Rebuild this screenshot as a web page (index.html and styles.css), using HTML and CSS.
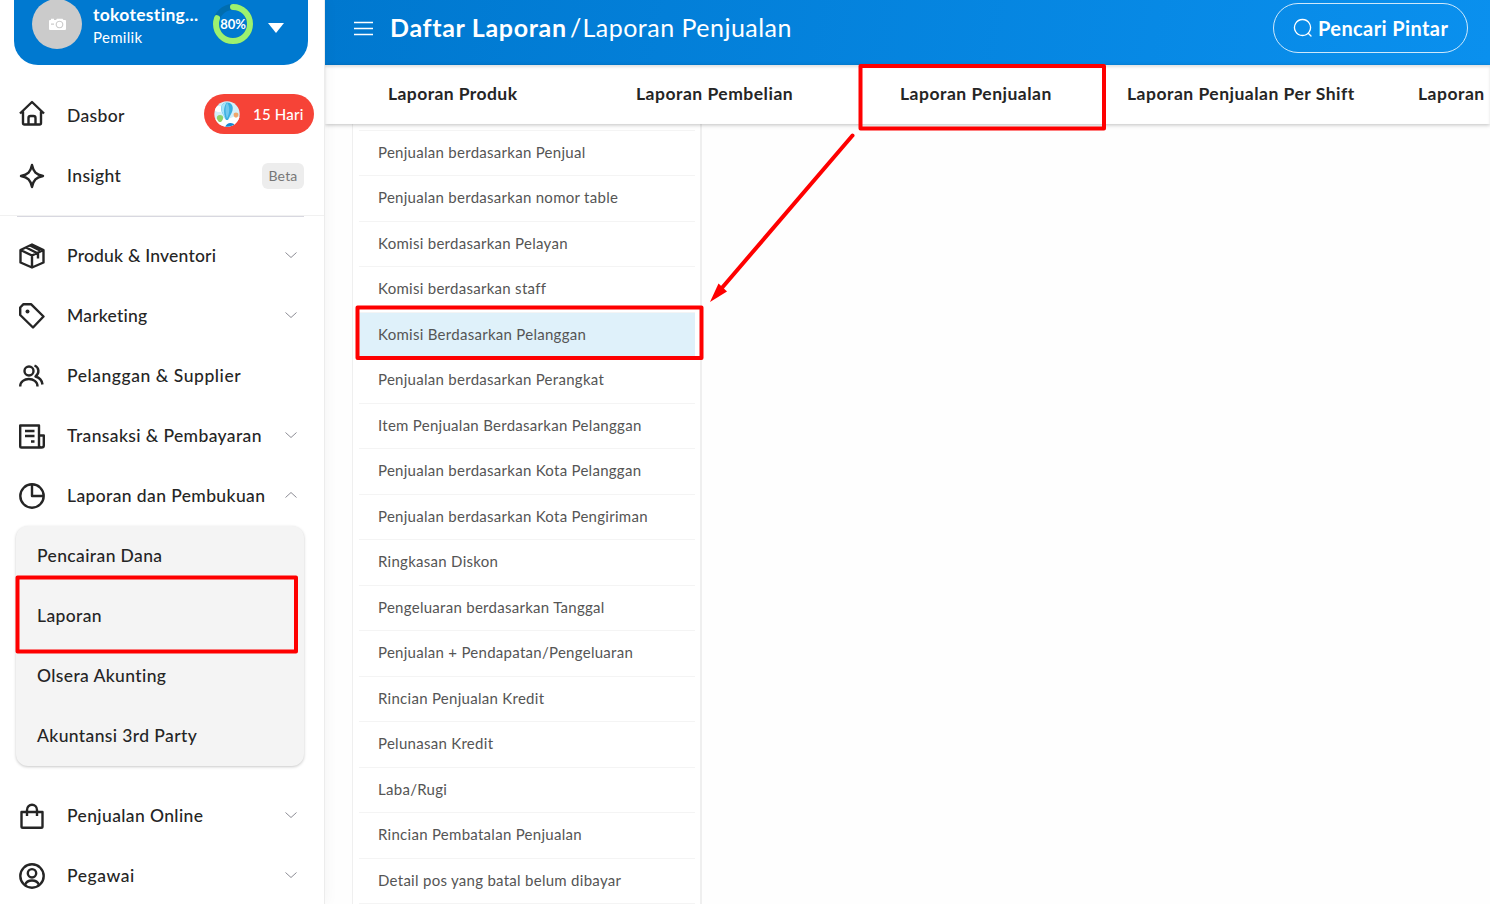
FILE: index.html
```html
<!DOCTYPE html>
<html lang="id">
<head>
<meta charset="utf-8">
<title>Daftar Laporan</title>
<link rel="stylesheet" href="styles.css">
</head>
<body>
<div class="app">
  <aside class="sidebar">
    <div class="account">
      <div class="avatar"><svg width="17" height="12" viewBox="0 0 17 12"><path fill="#fff" fill-rule="evenodd" d="M1 2h1V.8h3V2h2l1-1.2h5.5l1 1.2h1.500q1 0 1 1v8q0 1-1 1H1q-1 0-1-1V3q0-1 1-1zM10.500 2.700a3.800 3.800 0 1 0 .01 0zM2 5.500v1.200h3V5.500z"/><circle cx="10.500" cy="6.500" r="2.700" fill="#fff"/></svg></div>
      <div class="who"><div class="shop">tokotesting...</div><div class="role">Pemilik</div></div>
      <div class="progress">
        <svg width="40" height="40" viewBox="0 0 40 40"><circle cx="20" cy="20" r="17" fill="none" stroke="#006daf" stroke-width="6"/><circle cx="20" cy="20" r="17" fill="none" stroke="#9df16f" stroke-width="6" stroke-linecap="round" stroke-dasharray="85.500 120" transform="rotate(-90 20 20)"/></svg>
        <span class="percent">80%</span>
      </div>
      <svg class="caret" width="16" height="10" viewBox="0 0 16 10"><path fill="#fff" d="M0 0h16L8 10z"/></svg>
    </div>
    <nav class="nav nav-top">
      <a class="item dash"><svg class="icon" viewBox="0 0 26 26"><path d="M1 13.500 13 2l12 11.500M4 11.500V23q0 1.500 1.500 1.500h15q1.500 0 1.500-1.500V11.500M9.500 24V18q0-2 2-2h3q2 0 2 2v6"/></svg><span class="label">Dasbor</span>
        <span class="trial"><svg width="26" height="26" viewBox="0 0 26 26"><defs><clipPath id="disc"><circle cx="13" cy="13" r="12.700"/></clipPath></defs><g clip-path="url(#disc)"><path fill="#d3effa" d="M0 0h26v26H0z"/><ellipse cx="5" cy="8" rx="5" ry="3" fill="#fff"/><path fill="#fff" d="M0 19q8-4 13 0 7-5 13-3v10H0z"/><path fill="#3aaee0" d="M13 1.500C6 1.500 6 9 9.500 14l2.500 5h2l2.500-5C20 9 20 1.500 13 1.500z"/><path fill="#a6e3fa" d="M12.500 1.500C6 2 6.500 9 9.500 14l2 3.500c-2-6-2-11 1-16z"/><path fill="#70c8ee" d="M13 1.500c3 4 3 10 0 16-2-6-2-12 0-16z"/><path fill="#8ed36a" d="M6 14c-4 0-4 4-1 7h2c3-3 3-7-1-7z"/><path fill="#efa66b" d="M22 11.500c-3 0-3 3-1 5h2c2-2 2-5-1-5z"/><path fill="#1688d1" d="M11 26q3-6 9-3v3z"/></g></svg><span class="days">15 Hari</span></span></a>
      <a class="item"><svg class="icon" viewBox="0 0 26 26"><path d="M13 2c1.500 7 4 9.500 11 11-7 1.500-9.500 4-11 11-1.500-7-4-9.500-11-11 7-1.500 9.500-4 11-11z"/></svg><span class="label">Insight</span><span class="beta">Beta</span></a>
    </nav>
    <nav class="nav nav-main">
      <a class="item"><svg class="icon" viewBox="0 0 26 26"><path d="M13 1.500 24.500 7v12.500L13 24.500 1.500 19.500V7zM1.500 7 13 12.500 24.500 7M13 12.500v12M7 4.500l12 6v5M11 2.500l10 5"/></svg><span class="label produk">Produk &amp; Inventori</span><svg class="chev" viewBox="0 0 12 6"><path d="M.5.500 6 5.500 11.500.500"/></svg></a>
      <a class="item"><svg class="icon" viewBox="0 0 26 26"><path d="M1.200 4.500 4.500 1.200h7.500L24.500 13.500 14 24.500 1.200 12z"/><circle class="solid" cx="8.500" cy="8.500" r="2"/></svg><span class="label produk">Marketing</span><svg class="chev" viewBox="0 0 12 6"><path d="M.5.500 6 5.500 11.500.500"/></svg></a>
      <a class="item"><svg class="icon" viewBox="0 0 26 26"><circle cx="10" cy="8" r="4.500"/><path d="M1.200 23.500c0-10 17.300-10 17.300 0M15.500 2.500c5 2 5 8 1 11 4 1 6.500 4 7 8"/></svg><span class="label wide">Pelanggan &amp; Supplier</span></a>
      <a class="item"><svg class="icon" viewBox="0 0 26 26"><path d="M20 24.500H2.500q-1.300 0-1.300-1.300V2.500H20zM20 12.500h4.800v10q0 2-2.400 2T20 22.500M6 8h9.500M6 13h9.500M12 18.500h3.500"/></svg><span class="label">Transaksi &amp; Pembayaran</span><svg class="chev" viewBox="0 0 12 6"><path d="M.5.500 6 5.500 11.500.500"/></svg></a>
      <a class="item"><svg class="icon" viewBox="0 0 26 26"><circle cx="13" cy="13" r="11.700"/><path d="M13 1.500V13h11.500"/></svg><span class="label">Laporan dan Pembukuan</span><svg class="chev" viewBox="0 0 12 6"><path d="M.5 5.500 6 .500l5.500 5"/></svg></a>
      <div class="submenu">
        <a class="sub">Pencairan Dana</a><a class="sub">Laporan</a><a class="sub">Olsera Akunting</a><a class="sub">Akuntansi 3rd Party</a>
      </div>
      <a class="item"><svg class="icon" viewBox="0 0 26 26"><path d="M2.500 9h21v14.500q0 1.300-1.300 1.300H3.800q-1.300 0-1.300-1.300zM8 13V7c0-7 10-7 10 0v6"/></svg><span class="label">Penjualan Online</span><svg class="chev" viewBox="0 0 12 6"><path d="M.5.500 6 5.500 11.500.500"/></svg></a>
      <a class="item"><svg class="icon" viewBox="0 0 26 26"><circle cx="13" cy="13" r="11.700"/><circle cx="13" cy="10.300" r="4.200"/><path d="M6 22c2-6 12-6 14 0"/></svg><span class="label wide">Pegawai</span><svg class="chev" viewBox="0 0 12 6"><path d="M.5.500 6 5.500 11.500.500"/></svg></a>
    </nav>
  </aside>
  <main class="main">
    <header class="topbar">
      <svg class="burger" width="19" height="15" viewBox="0 0 19 15"><path stroke="#fff" stroke-width="1.500" d="M0 1.500h19M0 7.500h19M0 13.500h19"/></svg>
      <h1 class="title"><span class="strong">Daftar Laporan</span><span class="slash">/</span><span class="light">Laporan Penjualan</span></h1>
      <button class="search"><svg width="20" height="20" viewBox="0 0 20 20"><path fill="none" stroke="#fff" stroke-width="1.300" stroke-linecap="round" d="M9.500 1.500a8 8 0 1 0 .01 0zM15.300 15.200l2.700 2.800"/></svg><span class="search-text">Pencari Pintar</span></button>
    </header>
    <nav class="tabs">
      <a class="tab">Laporan Produk</a><a class="tab">Laporan Pembelian</a><a class="tab">Laporan Penjualan</a><a class="tab">Laporan Penjualan Per Shift</a><a class="tab last">Laporan</a>
    </nav>
    <section class="content">
      <ul class="reports">
        <li class="report"><span>Penjualan berdasarkan Penjual</span></li>
        <li class="report"><span>Penjualan berdasarkan nomor table</span></li>
        <li class="report"><span>Komisi berdasarkan Pelayan</span></li>
        <li class="report"><span>Komisi berdasarkan staff</span></li>
        <li class="report active"><span>Komisi Berdasarkan Pelanggan</span></li>
        <li class="report"><span>Penjualan berdasarkan Perangkat</span></li>
        <li class="report"><span>Item Penjualan Berdasarkan Pelanggan</span></li>
        <li class="report"><span>Penjualan berdasarkan Kota Pelanggan</span></li>
        <li class="report"><span>Penjualan berdasarkan Kota Pengiriman</span></li>
        <li class="report"><span>Ringkasan Diskon</span></li>
        <li class="report"><span>Pengeluaran berdasarkan Tanggal</span></li>
        <li class="report"><span>Penjualan + Pendapatan/Pengeluaran</span></li>
        <li class="report"><span>Rincian Penjualan Kredit</span></li>
        <li class="report"><span>Pelunasan Kredit</span></li>
        <li class="report"><span>Laba/Rugi</span></li>
        <li class="report"><span>Rincian Pembatalan Penjualan</span></li>
        <li class="report"><span>Detail pos yang batal belum dibayar</span></li>
        <li class="report"></li>
      </ul>
    </section>
  </main>
  <svg class="marks" width="1490" height="904" viewBox="0 0 1490 904">
    <g fill="none" stroke="#fe0000" stroke-width="4" stroke-linejoin="round" stroke-linecap="round"><path d="M860.500 66h243.500v62.500H860.500zM357.500 307.500h344V358h-344zM17.500 577.500h278.500v74H17.500zM852.500 135.500 721 289"/></g>
    <path fill="#fe0000" d="M710 302 718.500 283.500 727 291.500z"/>
  </svg>
</div>
</body>
</html>
```
FILE: styles.css
```css
* { box-sizing: border-box; }
body { margin: 0; font-family: Lato, "Open Sans", sans-serif; color: #252525; background: #fff; }
.app { position: relative; display: flex; width: 1490px; height: 904px; overflow: hidden; }

.sidebar { width: 325px; flex: none; background: #fff; border-right: 1px solid #ececec; box-shadow: 0 0 14px rgba(0,0,0,.05); z-index: 1; }
.account { display: flex; align-items: flex-start; width: 294px; height: 65px; margin-left: 14px; padding-left: 18px; background: #0079d0; border-radius: 0 0 24px 24px; color: #fff; }
.avatar { display: flex; align-items: center; justify-content: center; width: 50px; height: 50px; margin-top: -1px; border-radius: 50%; background: #cbcbcb; }
.who { width: 120px; margin: 3px 0 0 11px; white-space: nowrap; }
.shop { font-size: 17.5px; font-weight: 700; line-height: 23px; letter-spacing: .3px; }
.role { font-size: 15px; line-height: 22px; letter-spacing: .3px; }
.progress { display: grid; width: 40px; height: 40px; margin-top: 4px; place-items: center; }
.progress > * { grid-area: 1 / 1; }
.percent { font-size: 13px; font-weight: 700; }
.caret { margin: 23px 0 0 15px; }

.nav-top { height: 151px; padding-top: 21px; border-bottom: 1px solid #f1f1f1; }
.nav-main { padding-top: 9px; }
.nav-main::before { content: ""; display: block; width: 287px; height: 1px; margin: -9px 0 9px 17px; background: #d8d8e0; }
.item { display: flex; align-items: center; height: 60px; padding: 0 19px 0 19px; }
.icon { width: 26px; height: 26px; margin-right: 22px; flex: none; fill: none; stroke: #252525; stroke-width: 2.4; stroke-linejoin: round; }
.solid { fill: #252525; stroke: none; }
.dash .icon { margin-top: -7px; }
.label { margin-top: -2px; font-size: 17.5px; font-weight: 500; letter-spacing: .38px; white-space: nowrap; }
.label.produk { letter-spacing: .2px; }
.label.wide { letter-spacing: .55px; }
.chev { width: 12px; height: 6px; margin: -3px 8px 0 auto; fill: none; stroke: #8c8c94; stroke-width: 1; }
.trial { display: flex; align-items: center; width: 110px; height: 40px; margin: -4px -9px 0 auto; padding-left: 10px; border-radius: 20px; background: #f64337; color: #fff; }
.days { margin: -1px 0 0 13px; font-size: 15px; font-weight: 500; letter-spacing: .2px; white-space: nowrap; }
.beta { width: 42px; height: 26px; margin: 0 1px 0 auto; border-radius: 6px; background: #ededed; color: #777; font-size: 14px; line-height: 26px; text-align: center; letter-spacing: .2px; }
.submenu { width: 288px; margin: 0 0 20px 16px; height: 240px; border-radius: 12px; background: #f4f4f4; box-shadow: 0 1px 3px rgba(0,0,0,.22); }
.sub { display: block; height: 60px; padding-left: 21px; font-size: 17.5px; font-weight: 500; line-height: 60px; letter-spacing: .38px; }

.main { width: 1165px; flex: none; }
.topbar { display: flex; height: 65px; padding: 3px 22px 0 29px; background: linear-gradient(100deg, #0078cf, #0a90ee); color: #fff; }
.burger { margin: 18px 17px 0 0; }
.title { display: flex; margin: -1px 0 0; font-size: 25px; font-weight: 400; line-height: 50px; white-space: nowrap; }
.strong { width: 180px; font-weight: 700; letter-spacing: .68px; }
.slash { width: 12.500px; }
.light { letter-spacing: .48px; }
.search { display: flex; align-items: center; width: 195px; height: 50px; margin-left: auto; padding: 0 0 0 19px; border: 1px solid rgba(255,255,255,.8); border-radius: 25px; background: none; color: #fff; font: 700 20px Lato, sans-serif; white-space: nowrap; }
.search-text { margin: -1px 0 0 5px; letter-spacing: .4px; }
.tabs { position: relative; display: grid; grid-template-columns: 261.500px 261.500px 261.500px 267px 111px; height: 59px; background: #fff; box-shadow: 0 1px 4px rgba(0,0,0,.25), inset 0 2px 3px rgba(0,0,0,.12); font-size: 17.5px; font-weight: 700; line-height: 58px; white-space: nowrap; letter-spacing: .5px; }
.tab { padding-left: 63px; }
.tab:nth-child(1) { letter-spacing: .42px; }
.tab:nth-child(2) { padding-left: 49.500px; }
.tab:nth-child(3) { padding-left: 52px; }
.tab:nth-child(4) { padding-left: 17.500px; }
.tab:nth-child(5) { padding-left: 41.500px; }
.content { padding-left: 27px; height: 780px; background: #fefefe; }
.reports { width: 350px; height: 780px; margin: 0; padding: 5.700px 5px 0 6px; list-style: none; background: #fff; border: solid #efefef; border-width: 0 2px 0 1px; }
.report { height: 45.500px; border-top: 1px solid #f4f4f4; padding-left: 19px; font-size: 15px; line-height: 43.500px; letter-spacing: .28px; color: #555; white-space: nowrap; }
.report.active { background: #dff1fa; }
.marks { position: absolute; left: 0; top: 0; z-index: 3; }
```
